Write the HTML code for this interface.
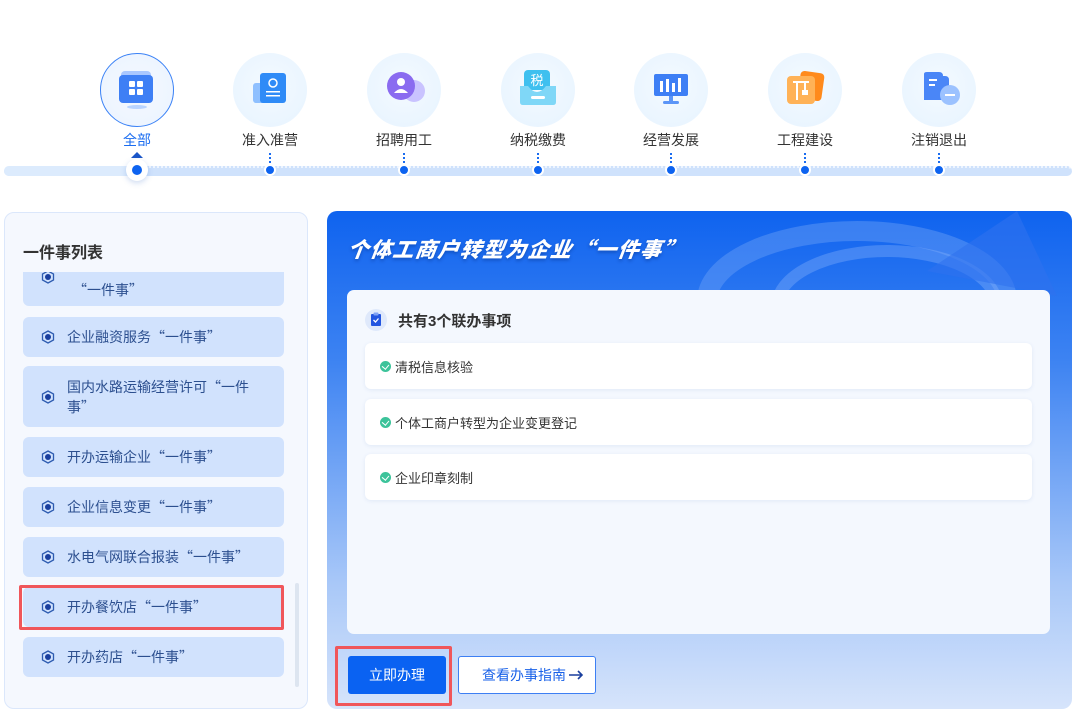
<!DOCTYPE html>
<html><head><meta charset="utf-8"><style>
*{margin:0;padding:0;box-sizing:border-box}
body{width:1080px;height:721px;background:#fff;font-family:"Liberation Sans","Noto Sans CJK SC",sans-serif;position:relative;overflow:hidden;color:#333}
.a{position:absolute}
.cj{font-family:"Noto Sans CJK SC",sans-serif}
.node{position:absolute;top:53px;width:74px;height:74px;border-radius:50%;background:radial-gradient(circle at 50% 45%,#f4faff 0%,#e6f3ff 100%)}
.lbl{position:absolute;top:130px;width:100px;text-align:center;font-size:14px;color:#333}
.tick{position:absolute;top:153px;width:2px;height:14px;border-left:2px dotted #1a6cf0}
.dot{position:absolute;top:164px;width:12px;height:12px;border-radius:50%;background:#0d63f0;border:2px solid #fff}
.item{position:absolute;left:23px;width:261px;background:#d1e2fd;border-radius:6px;font-size:14px;color:#2c4f8f;display:flex;align-items:center;padding-left:44px;line-height:20px;font-family:"Noto Sans CJK SC",sans-serif}
.hex{position:absolute;left:18px;width:14px;height:14px}
.row{position:absolute;left:365px;width:667px;height:46px;background:#fff;border-radius:6px;box-shadow:0 1px 4px rgba(80,120,200,.12);font-size:13px;color:#333;display:flex;align-items:center;padding-left:15px}
.ck{width:11px;height:11px;border-radius:50%;background:#3cc39a;margin-right:4px;position:relative}
.ck:after{content:"";position:absolute;left:3px;top:2px;width:4px;height:5px;border:solid #fff;border-width:0 1.5px 1.5px 0;transform:rotate(40deg)}
</style></head><body>
<div class="a" style="left:4px;top:166px;width:1068px;height:10px;border-radius:5px;background:#cfe2fc;border-top:2px dotted #eef5ff"></div>
<div class="a" style="left:4px;top:166px;width:133px;height:10px;border-radius:5px 0 0 5px;background:#dcebfd"></div>

<div class="node" style="left:100px;border:1px solid #3b82f6;background:radial-gradient(circle,#f5f9ff,#eaf3ff)"></div>
<div class="node" style="left:233px"></div>
<div class="node" style="left:367px"></div>
<div class="node" style="left:501px"></div>
<div class="node" style="left:634px"></div>
<div class="node" style="left:768px"></div>
<div class="node" style="left:902px"></div>

<svg class="a" style="left:117px;top:69px" width="40" height="40"><rect x="4" y="2" width="30" height="30" rx="4" fill="#a9c7ff"/><rect x="2" y="6" width="34" height="28" rx="4" fill="#3e7ff5"/><rect x="12" y="12" width="6" height="6" rx="1" fill="#fff"/><rect x="20" y="12" width="6" height="6" rx="1" fill="#fff"/><rect x="12" y="20" width="6" height="6" rx="1" fill="#fff"/><rect x="20" y="20" width="6" height="6" rx="1" fill="#fff"/><ellipse cx="20" cy="38" rx="10" ry="2" fill="#b9d4ff"/></svg>
<svg class="a" style="left:251px;top:69px" width="40" height="40"><rect x="2" y="14" width="18" height="20" rx="3" fill="#8fc0ff"/><rect x="9" y="4" width="26" height="30" rx="3" fill="#2f8bf7"/><circle cx="22" cy="14" r="4" fill="none" stroke="#fff" stroke-width="1.5"/><rect x="15" y="22" width="14" height="1.5" fill="#fff"/><rect x="15" y="26" width="14" height="1.5" fill="#fff"/></svg>
<svg class="a" style="left:384px;top:69px" width="44" height="40"><circle cx="30" cy="22" r="11" fill="#c9c3ff"/><circle cx="17" cy="17" r="14" fill="#8a6bf0"/><circle cx="17" cy="13" r="4" fill="#fff"/><path d="M10 24 Q17 16 24 24Z" fill="#fff"/></svg>
<svg class="a" style="left:518px;top:68px" width="40" height="42"><rect x="6" y="2" width="26" height="20" rx="4" fill="#3fc0ef"/><text x="19" y="17" font-size="13" fill="#fff" text-anchor="middle" font-family="Noto Sans CJK SC">税</text><path d="M2 18 L10 18 Q19 30 28 18 L38 18 L38 34 Q38 37 35 37 L5 37 Q2 37 2 34Z" fill="#7fd7f7"/><rect x="13" y="28" width="14" height="3" rx="1.5" fill="#fff"/></svg>
<svg class="a" style="left:652px;top:72px" width="40" height="36"><rect x="2" y="2" width="34" height="22" rx="2" fill="#3e7ff5"/><rect x="8" y="9" width="3" height="11" fill="#fff"/><rect x="14" y="7" width="3" height="13" fill="#fff"/><rect x="20" y="11" width="3" height="9" fill="#fff"/><rect x="26" y="6" width="3" height="14" fill="#fff"/><rect x="17" y="24" width="4" height="5" fill="#5b95f7"/><rect x="11" y="29" width="16" height="3" rx="1.5" fill="#5b95f7"/></svg>
<svg class="a" style="left:785px;top:70px" width="42" height="40"><rect x="14" y="2" width="24" height="28" rx="4" fill="#ff8a1c" transform="rotate(8 26 16)"/><rect x="2" y="6" width="28" height="28" rx="4" fill="#ffb257"/><path d="M8 12 L24 12 M12 12 L12 30 M20 12 L20 20" stroke="#fff" stroke-width="2"/><rect x="17" y="20" width="6" height="5" fill="#fff"/></svg>
<svg class="a" style="left:921px;top:70px" width="40" height="40"><path d="M3 4 Q3 2 6 2 L18 2 Q22 2 22 6 L24 6 Q28 6 28 10 L28 30 L3 30Z" fill="#4a86f7"/><rect x="8" y="9" width="8" height="2" fill="#fff"/><rect x="8" y="14" width="6" height="2" fill="#fff"/><circle cx="29" cy="25" r="10" fill="#9cc2ff"/><rect x="24" y="24" width="10" height="2" fill="#fff"/></svg>

<div class="lbl" style="left:87px;color:#1a6cf0">全部</div>
<div class="lbl" style="left:220px">准入准营</div>
<div class="lbl" style="left:354px">招聘用工</div>
<div class="lbl" style="left:488px">纳税缴费</div>
<div class="lbl" style="left:621px">经营发展</div>
<div class="lbl" style="left:755px">工程建设</div>
<div class="lbl" style="left:889px">注销退出</div>
<div class="a" style="left:131px;top:152px;border:6px solid transparent;border-bottom:6px solid #1a56c8;border-top:0"></div>
<div class="a" style="left:126px;top:159px;width:22px;height:22px;border-radius:50%;background:#fff;box-shadow:0 2px 6px rgba(60,110,200,.25)"></div>
<div class="a" style="left:132px;top:165px;width:10px;height:10px;border-radius:50%;background:#0d63f0"></div>
<div class="tick" style="left:269px"></div><div class="dot" style="left:264px"></div>
<div class="tick" style="left:403px"></div><div class="dot" style="left:398px"></div>
<div class="tick" style="left:537px"></div><div class="dot" style="left:532px"></div>
<div class="tick" style="left:670px"></div><div class="dot" style="left:665px"></div>
<div class="tick" style="left:804px"></div><div class="dot" style="left:799px"></div>
<div class="tick" style="left:938px"></div><div class="dot" style="left:933px"></div>

<div class="a" style="left:4px;top:212px;width:304px;height:497px;border:1px solid #dbe7fb;border-radius:10px;background:#f5f8fe"></div>
<div class="a" style="left:23px;top:239px;font-size:16px;font-weight:bold;color:#333">一件事列表</div>
<div class="a" style="left:23px;top:272px;width:261px;height:410px;overflow:hidden">
<div class="item" style="left:0;top:-10px;height:44px;padding-top:12px;padding-left:50px">“一件事”<svg class="hex" style="top:8px" viewBox="0 0 14 14"><path d="M7 1 L12.5 4 L12.5 10 L7 13 L1.5 10 L1.5 4Z" fill="none" stroke="#2d5bb0" stroke-width="1.3"/><circle cx="7" cy="7" r="3" fill="#1a3f9e"/></svg></div>
</div>
<div class="item" style="top:317px;height:40px"><svg class="hex" viewBox="0 0 14 14"><path d="M7 1 L12.5 4 L12.5 10 L7 13 L1.5 10 L1.5 4Z" fill="none" stroke="#2d5bb0" stroke-width="1.3"/><circle cx="7" cy="7" r="3" fill="#1a3f9e"/></svg>企业融资服务“一件事”</div>
<div class="item" style="top:366px;height:61px;padding-right:28px"><svg class="hex" viewBox="0 0 14 14"><path d="M7 1 L12.5 4 L12.5 10 L7 13 L1.5 10 L1.5 4Z" fill="none" stroke="#2d5bb0" stroke-width="1.3"/><circle cx="7" cy="7" r="3" fill="#1a3f9e"/></svg>国内水路运输经营许可“一件事”</div>
<div class="item" style="top:437px;height:40px"><svg class="hex" viewBox="0 0 14 14"><path d="M7 1 L12.5 4 L12.5 10 L7 13 L1.5 10 L1.5 4Z" fill="none" stroke="#2d5bb0" stroke-width="1.3"/><circle cx="7" cy="7" r="3" fill="#1a3f9e"/></svg>开办运输企业“一件事”</div>
<div class="item" style="top:487px;height:40px"><svg class="hex" viewBox="0 0 14 14"><path d="M7 1 L12.5 4 L12.5 10 L7 13 L1.5 10 L1.5 4Z" fill="none" stroke="#2d5bb0" stroke-width="1.3"/><circle cx="7" cy="7" r="3" fill="#1a3f9e"/></svg>企业信息变更“一件事”</div>
<div class="item" style="top:537px;height:40px"><svg class="hex" viewBox="0 0 14 14"><path d="M7 1 L12.5 4 L12.5 10 L7 13 L1.5 10 L1.5 4Z" fill="none" stroke="#2d5bb0" stroke-width="1.3"/><circle cx="7" cy="7" r="3" fill="#1a3f9e"/></svg>水电气网联合报装“一件事”</div>
<div class="item" style="top:587px;height:40px"><svg class="hex" viewBox="0 0 14 14"><path d="M7 1 L12.5 4 L12.5 10 L7 13 L1.5 10 L1.5 4Z" fill="none" stroke="#2d5bb0" stroke-width="1.3"/><circle cx="7" cy="7" r="3" fill="#1a3f9e"/></svg>开办餐饮店“一件事”</div>
<div class="a" style="left:19px;top:585px;width:265px;height:45px;border:3px solid #f0565a;border-radius:2px"></div>
<div class="item" style="top:637px;height:40px"><svg class="hex" viewBox="0 0 14 14"><path d="M7 1 L12.5 4 L12.5 10 L7 13 L1.5 10 L1.5 4Z" fill="none" stroke="#2d5bb0" stroke-width="1.3"/><circle cx="7" cy="7" r="3" fill="#1a3f9e"/></svg>开办药店“一件事”</div>
<div class="a" style="left:295px;top:583px;width:4px;height:104px;border-radius:2px;background:#dde5f0"></div>

<div class="a" style="left:327px;top:211px;width:745px;height:498px;border-radius:10px;overflow:hidden;background:linear-gradient(180deg,#0f63ef 0%,#3d83f2 30%,#a9c8f8 75%,#d6e4fb 100%)">
<svg class="a" style="left:360px;top:0" width="385" height="90"><ellipse cx="170" cy="90" rx="150" ry="70" fill="none" stroke="#6aa0f7" stroke-width="20" opacity=".45"/><ellipse cx="200" cy="95" rx="110" ry="55" fill="none" stroke="#8fb8fb" stroke-width="12" opacity=".35"/><path d="M330 0 L370 85 L240 60Z" fill="#2f72ee" opacity=".6"/></svg>
</div>
<div class="a cj" style="left:348px;top:234px;font-size:21px;font-weight:900;font-style:italic;color:#fff;text-shadow:0 2px 3px rgba(0,40,120,.4);letter-spacing:1.5px;transform:skewX(-8deg);transform-origin:left">个体工商户转型为企业“一件事”</div>
<div class="a" style="left:347px;top:290px;width:703px;height:344px;border-radius:7px;background:#f4f8fe"></div>
<div class="a" style="left:365px;top:309px;width:22px;height:22px;border-radius:50%;background:#dfe9fb"></div>
<svg class="a" style="left:370px;top:312px" width="12" height="15"><rect x="1" y="2" width="10" height="12" rx="1" fill="#2255e0"/><rect x="3.5" y="0.5" width="5" height="3" rx="1" fill="#7fa2f5"/><path d="M3.5 8 L5.5 10 L8.5 6.5" stroke="#fff" stroke-width="1.3" fill="none"/></svg>
<div class="a" style="left:398px;top:310px;font-size:15px;font-weight:bold;color:#333">共有3个联办事项</div>
<div class="row" style="top:343px"><span class="ck"></span>清税信息核验</div>
<div class="row" style="top:399px"><span class="ck"></span>个体工商户转型为企业变更登记</div>
<div class="row" style="top:454px"><span class="ck"></span>企业印章刻制</div>

<div class="a" style="left:335px;top:646px;width:117px;height:60px;border:3px solid #f0565a;border-radius:2px"></div>
<div class="a" style="left:348px;top:656px;width:98px;height:38px;background:#0a62f2;border-radius:3px;color:#fff;font-size:14px;text-align:center;line-height:38px">立即办理</div>
<div class="a" style="left:458px;top:656px;width:138px;height:38px;background:#fff;border:1px solid #3d7ff3;border-radius:3px;color:#1a62e8;font-size:14px;line-height:36px;padding-left:23px">查看办事指南<svg style="position:absolute;right:10px;top:13px" width="16" height="10"><path d="M0 5 H13 M9 1 L13 5 L9 9" stroke="#1a3f9e" stroke-width="1.6" fill="none"/></svg></div>
</body></html>
